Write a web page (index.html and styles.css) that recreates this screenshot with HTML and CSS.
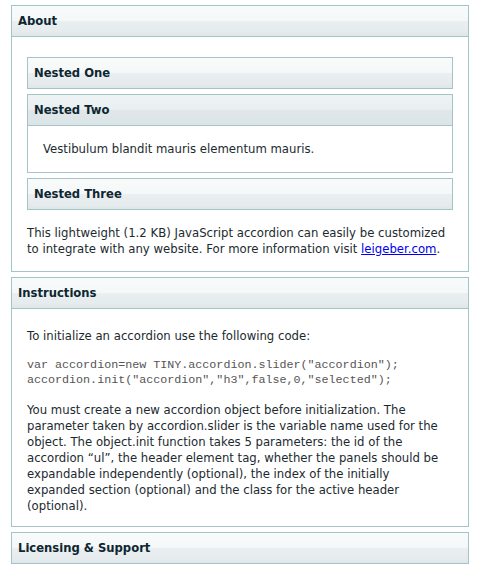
FILE: index.html
```html
<!DOCTYPE html>
<html>
<head>
<meta charset="utf-8">
<link rel="stylesheet" href="styles.css">
</head>
<body>
<ul class="acc">
  <li class="panel">
    <h3 class="head open">About</h3>
    <div class="body about">
      <ul class="acc nested">
        <li class="panel">
          <h3 class="head">Nested One</h3>
        </li>
        <li class="panel">
          <h3 class="head open selected">Nested Two</h3>
          <div class="body nested-body">
            <p class="text">Vestibulum blandit mauris elementum mauris.</p>
          </div>
        </li>
        <li class="panel">
          <h3 class="head">Nested Three</h3>
        </li>
      </ul>
      <p class="text">This lightweight (1.2 KB) JavaScript accordion can easily be customized to integrate with any website. For more information visit <a href="#" class="link">leigeber.com</a>.</p>
    </div>
  </li>
  <li class="panel">
    <h3 class="head open">Instructions</h3>
    <div class="body instr">
      <p class="text">To initialize an accordion use the following code:</p>
      <p class="code">var accordion=new TINY.accordion.slider("accordion");<br>accordion.init("accordion","h3",false,0,"selected");</p>
      <p class="text">You must create a new accordion object before initialization. The parameter taken by accordion.slider is the variable name used for the object. The object.init function takes 5 parameters: the id of the accordion “ul”, the header element tag, whether the panels should be expandable independently (optional), the index of the initially expanded section (optional) and the class for the active header (optional).</p>
    </div>
  </li>
  <li class="panel">
    <h3 class="head">Licensing &amp; Support</h3>
  </li>
</ul>
</body>
</html>
```
FILE: styles.css
```css
html, body {
  background: #ffffff;
}
body {
  margin: 0;
  padding: 5px 10px 0 11px;
  font-family: "DejaVu Sans", Verdana, sans-serif;
  font-size: 11.7px;
  line-height: 16px;
  color: #1c2a30;
}
.acc {
  list-style: none;
  margin: 0;
  padding: 0;
}
.panel {
  border: 1px solid #a3c4cb;
  margin-bottom: 5px;
}
.head {
  margin: 0;
  padding: 7px 6px;
  font-size: 11.6px;
  line-height: 16px;
  font-weight: bold;
  color: #0e2630;
  background: linear-gradient(#f9fbfb 0%, #f5f8f8 48%, #e9eff1 52%, #e6ecee 85%, #dfe6e8 100%);
}
.head.open {
  border-bottom: 1px solid #a3c4cb;
}
.head.selected {
  background: linear-gradient(#eef3f4 0%, #e9eff1 48%, #dfe7e9 52%, #dbe4e6 100%);
}
.about {
  padding: 20px 15px 14px;
}
.nested {
  margin-bottom: 15px;
}
.nested .panel:last-child {
  margin-bottom: 0;
}
.nested-body {
  padding: 15px 15px 15px;
}
.text {
  margin: 0;
}
.link {
  color: #0000ee;
  text-decoration: underline;
}
.instr {
  padding: 19px 18px 12px 15px;
}
.code {
  margin: 14px 0 14px;
  font-family: "Liberation Mono", "Courier New", monospace;
  font-size: 11.7px;
  line-height: 15px;
  color: #555;
}
```
